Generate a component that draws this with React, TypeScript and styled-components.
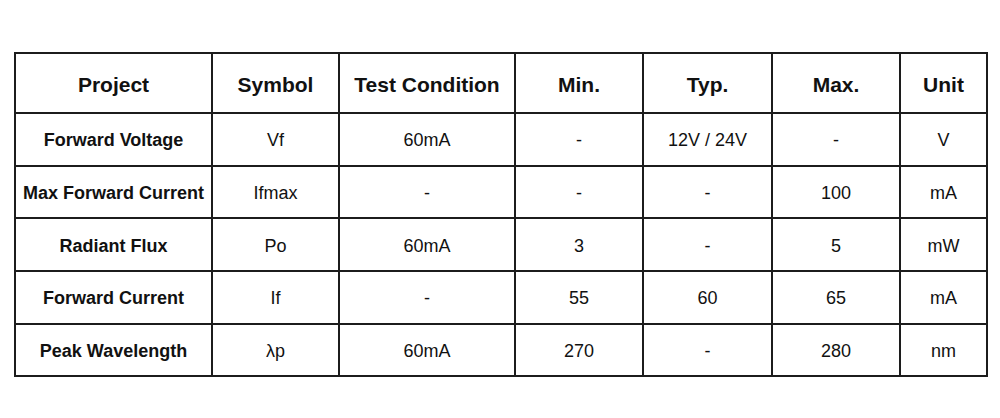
import React from "react";
import styled, { createGlobalStyle } from "styled-components";

const Global = createGlobalStyle`
  html, body { margin: 0; padding: 0; background: #ffffff; }
  body { font-family: "Liberation Sans", Arial, sans-serif; color: #111; }
`;

const Page = styled.div`
  padding: 52px 0 0 14px;
`;

const Table = styled.table`
  border-collapse: collapse;
  width: 972px;
  table-layout: fixed;
  border: 2px solid #1c1c1c;
`;

const HeadRow = styled.tr`
  height: 60px;
`;

const BodyRow = styled.tr`
  height: 52.7px;
`;

const Th = styled.th`
  border: 2px solid #1c1c1c;
  font-size: 21px;
  font-weight: 700;
  text-align: center;
  vertical-align: middle;
  padding: 3px 0 0;
  color: #111;
`;

const Td = styled.td<{ $bold?: boolean }>`
  border: 2px solid #1c1c1c;
  font-size: 18px;
  font-weight: ${(p) => (p.$bold ? 700 : 400)};
  text-align: center;
  vertical-align: middle;
  padding: 3px 0 0;
  white-space: nowrap;
  color: #111;
`;

const widths = [197, 127, 176, 128, 129, 128, 87];
const headers = ["Project", "Symbol", "Test Condition", "Min.", "Typ.", "Max.", "Unit"];
const rows = [
  ["Forward Voltage", "Vf", "60mA", "-", "12V / 24V", "-", "V"],
  ["Max Forward Current", "Ifmax", "-", "-", "-", "100", "mA"],
  ["Radiant Flux", "Po", "60mA", "3", "-", "5", "mW"],
  ["Forward Current", "If", "-", "55", "60", "65", "mA"],
  ["Peak Wavelength", "λp", "60mA", "270", "-", "280", "nm"],
];

export default function App() {
  return (
    <>
      <Global />
      <Page>
        <Table>
          <colgroup>
            {widths.map((w, i) => (
              <col key={i} style={{ width: w }} />
            ))}
          </colgroup>
          <thead>
            <HeadRow>
              {headers.map((h) => (
                <Th key={h}>{h}</Th>
              ))}
            </HeadRow>
          </thead>
          <tbody>
            {rows.map((r, i) => (
              <BodyRow key={i}>
                {r.map((c, j) => (
                  <Td key={j} $bold={j === 0}>
                    {c}
                  </Td>
                ))}
              </BodyRow>
            ))}
          </tbody>
        </Table>
      </Page>
    </>
  );
}
